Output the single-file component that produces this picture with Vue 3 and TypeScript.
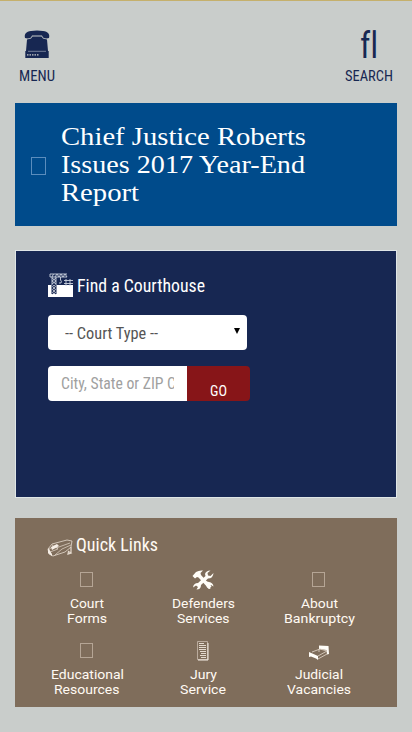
<script setup lang="ts">
import { h } from 'vue'

interface FitProps { t: string; w: number; s: number; lh: number; b: number }

/* One line of text fitted to a width: s = font size, lh = line height, b = baseline */
const Fit = (p: FitProps) =>
  h('svg', { class: 'fit', width: p.w, height: p.lh }, [
    h('text', { x: 0, y: p.b, 'font-size': p.s, textLength: p.w, lengthAdjust: 'spacingAndGlyphs' }, p.t),
  ])
Fit.props = ['t', 'w', 's', 'lh', 'b']

const headline = [
  { t: 'Chief Justice Roberts', w: 245 },
  { t: 'Issues 2017 Year-End', w: 244 },
  { t: 'Report', w: 78 },
]
const links = [
  { icon: 'box', lines: [['Court', 34], ['Forms', 40]] },
  { icon: 'tools', lines: [['Defenders', 63], ['Services', 52.5]] },
  { icon: 'box', lines: [['About', 37], ['Bankruptcy', 71]] },
  { icon: 'box', lines: [['Educational', 73], ['Resources', 65.5]] },
  { icon: 'page', lines: [['Jury', 27], ['Service', 46]] },
  { icon: 'bed', lines: [['Judicial', 48], ['Vacancies', 64]] },
] as { icon: string; lines: [string, number][] }[]
</script>

<template>
  <div class="page">
    <header class="top">
      <a class="nav menu">
        <svg class="phone" width="26" height="28" viewBox="0 0 26 28">
          <path d="M1 8C0 4 2 1.500 7 1Q13 .2 19 1C24 1.500 26 4 25 8Q22 9 19 7.500L18 5.500H8L7 7.500Q4 9 1 8Z" />
          <path d="M8.500 6.500H17.500L19 8.500 23 9.500 24 21H2L3 9.500 7 8.500Z" />
          <path d="M1.300 21H24.700V28H1.300Z" />
          <path d="M4 21.300H22" stroke="#8d96ab" stroke-width=".8" />
          <path d="M3 24.800H15" stroke="#c9cdcb" stroke-width="1.300" stroke-dasharray="1.500 1" />
        </svg>
        <Fit t="MENU" :w="36" :s="15.500" :lh="20" :b="15" />
      </a>
      <a class="nav search">
        <Fit class="fl" t="fl" :w="18" :s="36" :lh="28" :b="28" />
        <Fit t="SEARCH" :w="48" :s="15.500" :lh="20" :b="15" />
      </a>
    </header>

    <section class="news">
      <i class="missing"></i>
      <h1><Fit v-for="l in headline" :key="l.t" :t="l.t" :w="l.w" :s="26" :lh="28" :b="22" /></h1>
    </section>

    <section class="find">
      <h2>
        <svg width="25" height="24" viewBox="0 0 25 24">
          <path d="M0 12H25V24H0Z" fill="#fff" />
          <path d="M2 1H19M2 4H19M2 1V4M5.500 1 4 4M7 4 9 1 11 4 13 1 15 4 17 1 19 4M4 4V12M8 4V12M4 5 8 8 4 11M8 5 4 8 8 11M12.500 4V7Q14 8 13 10H11M16 7.500H25M16 10.500H25M18 6V13M22 6V13" fill="none" stroke="#ccd2df" stroke-width=".9" />
          <path d="M4 12V21M8 12V21M4 12 8 15 4 18 8 21M8 12 4 15 8 18 4 21" fill="none" stroke="#172752" stroke-width="1" />
        </svg>
        <Fit t="Find a Courthouse" :w="128" :s="19" :lh="24" :b="19" />
      </h2>
      <div class="select">
        <Fit t="-- Court Type --" :w="93" :s="16.500" :lh="35" :b="24" />
        <i class="arrow"></i>
      </div>
      <div class="group">
        <div class="input"><div class="clip"><Fit t="City, State or ZIP Code" :w="138" :s="16.500" :lh="35" :b="23" /></div></div>
        <button class="go"><Fit t="GO" :w="17" :s="14.500" :lh="35" :b="30" /></button>
      </div>
    </section>

    <section class="quick">
      <h2>
        <svg width="26" height="18" viewBox="0 0 26 18" fill="none" stroke="#e6dbcf">
          <path d="M1 10 5 5 20 1 25 2 24 8 18 13 6 17 2 15Z" stroke-width=".8" />
          <path d="M5 6 9 9 23 4M8 16Q14 9 24 6M2 10 8 7 11 10 3 13Z" stroke-width=".7" />
          <path d="M1 9 5 15 5 17 1 14ZM4 8 10 5 12 7 5 11Z" fill="#f5ede5" stroke="none" />
          <path d="M24 8V14M21.500 12.500 24 14 21 15Z" stroke-width="1.200" />
        </svg>
        <Fit t="Quick Links" :w="82" :s="19" :lh="24" :b="18" />
      </h2>
      <ul>
        <li v-for="(l, i) in links" :key="i">
          <span class="icon">
            <i v-if="l.icon === 'box'" class="box"></i>
            <svg v-else-if="l.icon === 'tools'" width="22" height="20" viewBox="0 0 22 20" fill="#fffdf8">
              <path d="M.5 6 4 2Q7 0 11 .5L8.500 3 9 5 19.500 16.500 17 19 6.500 7.500 5 7 3 8.500Z" />
              <path d="M21.500 3 18.500 6 16 5.500 15.500 3 18.500 .5Q14 .5 13 4L13.500 6 6 13Q1.500 13 1 17.500L4 15.500 6 17 4.500 19.500Q9 19.500 9 15L16 8.500Q21 8.500 21.500 3Z" />
              <path d="M13 11 17 12Q21 12.500 21.500 16.500L19 15 17.500 16.500 18.500 19Q15 18.500 14.500 16Z" />
            </svg>
            <svg v-else-if="l.icon === 'page'" width="12" height="20" viewBox="0 0 12 20">
              <path d="M.5.500H10.500V18.500H.5Z" fill="none" stroke="#c9bbae" stroke-width=".8" />
              <path d="M2 2.500H7M2 4.500H9M2 6.500H9M2 8.500H9M3 10.500H9M4 12.500H9M3 14.500H9M4 16.500H9" stroke="#e3d9ce" stroke-width="1.200" />
              <path d="M1 19H11V2" fill="none" stroke="#f5ede5" stroke-width="1" />
            </svg>
            <svg v-else class="bed" width="22" height="16" viewBox="0 0 22 16">
              <path d="M1 7 10 11V15L8 13.500 3 11.500 1 12ZM11 .5 20.500 1 21 9 19 9.500 18.500 5 11 4Z" fill="#fffdf8" />
              <path d="M4 7 12 4 19 6 10 11M10 14 19 9M11 4V7" fill="none" stroke="#d9cdbf" stroke-width=".9" />
            </svg>
          </span>
          <Fit v-for="x in l.lines" :key="x[0]" :t="x[0]" :w="x[1]" :s="13" :lh="14.500" :b="12" />
        </li>
      </ul>
    </section>
  </div>
</template>

<style>
body { background: #c9cdcb; }
</style>
<style scoped>
.page {
  box-sizing: border-box;
  width: 412px;
  height: 732px;
  padding: 0 15px;
  border-top: 1px solid #c5b06c;
  background: #c9cdcb;
  font-family: "Roboto Condensed", Roboto, sans-serif;
  overflow: hidden;
}
.fit { display: block; overflow: visible; fill: currentColor; flex: none; }
.fl { font-variant-ligatures: none; }
h1, h2, ul { margin: 0; padding: 0; font-weight: 400; }
.top { display: flex; justify-content: space-between; height: 102px; color: #172752; }
.nav { display: flex; flex-direction: column; align-items: center; padding-top: 29px; gap: 8px; }
.menu { margin-left: 4px; }
.search { margin-right: 4.5px; }
.phone { fill: #172752; }
.news {
  box-sizing: border-box;
  display: flex;
  height: 123px;
  padding: 20px 16px 0;
  background: #004b8b;
  color: #fff;
  font-family: "Liberation Serif", serif;
}
.missing { box-sizing: border-box; width: 15px; height: 18px; margin: 34px 15px 0 0; border: 1px solid #5b8dbd; }
.find {
  box-sizing: border-box;
  height: 248px;
  margin-top: 24px;
  padding: 22px 32px;
  border: 1px solid #dfe5e6;
  background: #172752;
  color: #fff;
}
h2 { display: flex; gap: 4px; }
.select {
  box-sizing: border-box;
  display: flex;
  align-items: center;
  justify-content: space-between;
  width: 199px;
  height: 35px;
  margin-top: 18px;
  padding: 0 7px 0 17px;
  border-radius: 4px;
  background: #fff;
  color: #555;
}
.arrow { border: 3px solid transparent; border-top: 6px solid #000; border-bottom: 0; margin-top: -3px; }
.group { display: flex; margin-top: 16px; }
.input { box-sizing: border-box; width: 139px; height: 35px; padding: 0 13px; border-radius: 4px 0 0 4px; background: #fff; color: #a0a0a0; }
.clip { overflow: hidden; }
.go { display: flex; justify-content: center; width: 63px; height: 35px; padding: 0; border: 0; border-radius: 0 4px 4px 0; background: #871518; color: #fff; font-family: inherit; }
.quick { box-sizing: border-box; height: 189px; margin-top: 20px; padding: 15px 14px 0; background: #7f6d5b; color: #fffaf3; }
.quick h2 { gap: 3px; padding-left: 18px; }
.quick h2 svg:first-child { margin-top: 6px; }
ul { display: grid; grid-template-columns: repeat(3, 116px); grid-auto-rows: 71px; margin-top: 12px; list-style: none; font-family: Roboto, sans-serif; }
li { display: flex; flex-direction: column; align-items: center; }
.icon { display: flex; align-items: center; justify-content: center; height: 21px; margin-bottom: 6px; }
.box { box-sizing: border-box; width: 13px; height: 15px; margin-right: 1px; border: 1px solid #b5a595; }
.bed { margin-top: 5px; }
</style>
